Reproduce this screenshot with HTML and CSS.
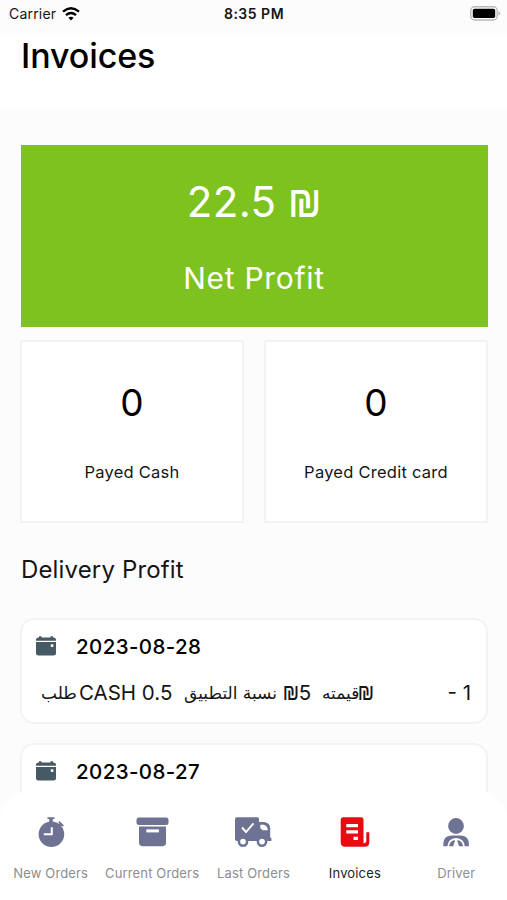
FILE: index.html
```
<!DOCTYPE html>
<html lang="en">
<head>
<meta charset="utf-8">
<title>Invoices</title>
<link rel="stylesheet" href="styles.css">
</head>
<body>
<div class="app">
  <header class="status">
    <div class="carrier"><span>Carrier</span>
      <svg width="18" height="14" viewBox="0 0 18 14"><g fill="none" stroke="#000" stroke-width="2.4"><path d="M1 4.7Q9-2 17 4.7"/><path d="M4 8.1Q9 3.8 14 8.1"/></g><path d="M6.4 10.7Q9 8.6 11.6 10.7L9 13.6Z"/></svg>
    </div>
    <time class="clock">8:35 PM</time>
    <svg class="battery" width="31" height="15" viewBox="0 0 31 15"><rect x=".8" y=".8" width="26.4" height="13.2" rx="4" fill="#fff" stroke="#b9b9b9" stroke-width="1.4"/><rect x="2.8" y="2.7" width="22.4" height="9.4" rx="1.8"/><path d="M28.5 5.2Q30.3 6 30.3 7.4T28.5 9.6Z" fill="#b9b9b9"/></svg>
  </header>
  <div class="heading"><h1>Invoices</h1></div>
  <main class="content">
    <section class="profit">
      <div class="amount">22.5 <span class="sign">₪</span></div>
      <div class="profit-label">Net Profit</div>
    </section>
    <section class="payments">
      <div class="payment"><div class="count">0</div><div class="payment-label">Payed Cash</div></div>
      <div class="payment"><div class="count">0</div><div class="payment-label">Payed Credit card</div></div>
    </section>
    <h2>Delivery Profit</h2>
    <article class="invoice">
      <div class="date-row">
        <svg class="calendar" width="20" height="20" viewBox="0 0 20 20"><path d="M0 4.8V4Q0 1.5 2.5 1.5H3V.3H5.5V1.5H14.5V.3H17V1.5H17.5Q20 1.5 20 4V4.8Z" fill="#455a64"/><path d="M0 6H20V17Q20 19.5 17.5 19.5H2.5Q0 19.5 0 17Z" fill="#455a64"/><rect x="14.8" y="8.3" width="2.6" height="2.6" fill="#fff"/></svg>
        <span>2023-08-28</span>
      </div>
      <div class="detail">
        <span class="ar order">طلب</span><span class="latin">CASH 0.5</span><span class="ar rate">نسبة التطبيق</span><span class="price"><span class="sign">₪</span>5</span><span class="ar value">قيمته</span><span class="sign">₪</span>
        <span class="index">- 1</span>
      </div>
    </article>
    <article class="invoice">
      <div class="date-row">
        <svg class="calendar" width="20" height="20" viewBox="0 0 20 20"><path d="M0 4.8V4Q0 1.5 2.5 1.5H3V.3H5.5V1.5H14.5V.3H17V1.5H17.5Q20 1.5 20 4V4.8Z" fill="#455a64"/><path d="M0 6H20V17Q20 19.5 17.5 19.5H2.5Q0 19.5 0 17Z" fill="#455a64"/><rect x="14.8" y="8.3" width="2.6" height="2.6" fill="#fff"/></svg>
        <span>2023-08-27</span>
      </div>
    </article>
  </main>
  <nav class="tabs">
    <a class="tab">
      <svg width="40" height="32" viewBox="0 0 40 32"><circle cx="20.4" cy="18.3" r="12.8"/><path d="M16.5 1.3H23.5V3H21.8V6.5H18.2V3H16.5Z"/><path d="M28.5 5L33 9.5L31.8 10.6L30.4 9.7L28.7 11.2L26.9 9.4L28.5 7.8L27.4 6.2Z"/><path d="M20.8 11.3V18.3H12.8" fill="none" stroke="#fff" stroke-width="2"/></svg>
      <span>New Orders</span></a>
    <a class="tab">
      <svg width="40" height="32" viewBox="0 0 40 32"><rect x="4.5" y="1.4" width="32" height="7.6" rx="2.5"/><path d="M7 10.6H34V26.5Q34 30.3 30.2 30.3H10.8Q7 30.3 7 26.5Z"/><rect x="14.3" y="13.4" width="12.6" height="3" fill="#fff"/></svg>
      <span>Current Orders</span></a>
    <a class="tab">
      <svg width="40" height="32" viewBox="0 0 40 32"><path d="M3.8 1.3H24.3Q26 1.3 26 3V6H31.2Q37.5 6.8 37.2 13V21.8H38.4V25H3.8Q2 25 2 23.2V3.1Q2 1.3 3.8 1.3Z"/><path d="M27.3 8.8H30.5Q34.2 9.4 34.9 14.2H29.9L27.3 12.2Z" fill="#fff"/><g stroke="#6f7393" stroke-width="2.5" fill="#fff"><circle cx="10" cy="25.6" r="4.1"/><circle cx="29" cy="25.6" r="4.1"/></g><path d="M9 11.5L13 16L20.5 7.3" fill="none" stroke="#fff" stroke-width="1.9"/></svg>
      <span>Last Orders</span></a>
    <a class="tab active">
      <svg width="40" height="32" viewBox="0 0 40 32"><path d="M8 1.3H26.2Q28.5 1.3 28.5 3.6V27.2Q31.3 27.4 31.3 24V16.2H34.3V26.2Q34.3 30.7 29.7 30.7H10.2Q5.7 30.7 5.7 26.2V3.8Q5.7 1.3 8 1.3Z"/><path d="M11.3 8H23V11.2H11.3ZM11.3 14.2H23V17.4H11.3ZM18.5 20.8H23V24H18.5Z" fill="#fff"/></svg>
      <span>Invoices</span></a>
    <a class="tab">
      <svg width="40" height="32" viewBox="0 0 40 32"><circle cx="20" cy="10" r="7.9"/><path d="M7.4 30.5Q6.4 19.5 16.1 19.5H24.1Q33.8 19.5 32.8 30.5Z"/><path d="M12.1 31Q12.6 23.3 20.1 22.8Q27.6 23.3 28.1 31" fill="none" stroke="#fff" stroke-width="1.7"/><path d="M17 31Q17.8 26.5 20.1 24Q22.4 26.5 23.2 31Z" fill="#fff"/><path d="M20.1 23.3V27.3" stroke="#fff" stroke-width="2.6"/><path d="M6.6 31H33.6" stroke="#fff" stroke-width="1"/></svg>
      <span>Driver</span></a>
  </nav>
</div>
</body>
</html>
```
FILE: styles.css
```
* { box-sizing: border-box; }
body { margin: 0; font-family: Inter, "DejaVu Sans", sans-serif; color: #151515; background: #fcfcfc; }
h1, h2 { margin: 0; }
svg { flex: none; }
.app { width: 507px; height: 900px; overflow: hidden; display: flex; flex-direction: column; }
.status { flex: none; height: 35px; padding: 0 6px 8px 9px; display: grid; grid-template-columns: 1fr auto 1fr; align-items: center; }
.carrier { display: flex; gap: 6px; font-size: 14px; line-height: 20px; letter-spacing: .2px; align-items: center; }
.clock { font-size: 14px; line-height: 20px; font-weight: 600; letter-spacing: .5px; margin-right: 2px; }
.battery { justify-self: end; }
.heading { flex: none; height: 73px; padding-left: 21px; background: #fff; }
h1 { font-size: 34px; line-height: 42px; font-weight: 450; letter-spacing: -.1px; color: #000; }
.content { flex: 1; min-height: 0; overflow: hidden; padding: 37px 20px 0; }
.profit { width: 467px; height: 182px; margin-left: .5px; background: #7ec220; color: #fff; text-align: center; font-weight: 370; padding-top: 31px; }
.amount { font-size: 42px; line-height: 52px; letter-spacing: .3px; }
.sign { display: inline-block; font-family: Roboto, sans-serif; transform: scaleY(1.25); transform-origin: 50% 74%; }
.profit-label { margin-top: 29px; font-size: 30px; line-height: 40px; letter-spacing: .7px; }
.payments { width: 468px; display: grid; grid-template-columns: 1fr 1fr; gap: 20px; margin-top: 13px; }
.payment { height: 183px; border: 2px solid #f3f3f3; background: #fff; text-align: center; padding-top: 38px; }
.count { font-size: 37px; line-height: 46px; font-weight: 370; color: #000; }
.payment-label { margin-top: 35px; font-size: 16.5px; line-height: 22px; letter-spacing: .25px; }
h2 { margin: 31px 0 32px 1px; font-size: 24px; line-height: 32px; font-weight: 400; letter-spacing: .15px; }
.invoice { width: 468px; height: 106px; border: 2px solid #f3f3f3; border-radius: 14px; background: #fff; margin-bottom: 19px; padding: 12px 15px 0 14px; }
.date-row { height: 28px; display: flex; align-items: center; gap: 20px; font-size: 20.5px; font-weight: 500; letter-spacing: .4px; color: #000; }
.detail { height: 30px; margin-top: 18px; padding-left: 5px; display: flex; align-items: center; font-size: 20.5px; line-height: 30px; white-space: nowrap; }
.ar { font-family: "DejaVu Sans", sans-serif; font-size: 17px; }
.order { width: 38px; }
.latin { width: 105px; }
.rate { width: 99px; }
.price { width: 39px; }
.value { width: 36px; }
.index { margin-left: auto; }
.tabs { flex: none; height: 108px; background: #fff; border-radius: 26px 26px 0 0; display: grid; grid-template-columns: repeat(5, 1fr); padding-top: 24px; }
.tab { display: flex; flex-direction: column; align-items: center; font-size: 13px; line-height: 18px; letter-spacing: .15px; color: #8d8d8d; white-space: nowrap; }
.tab svg { fill: #6f7393; margin-bottom: 16px; }
.active { color: #222; }
.active svg { fill: #e60c12; }
```
